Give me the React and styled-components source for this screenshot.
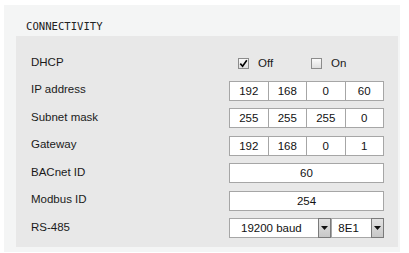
import React from "react";
import styled, { createGlobalStyle } from "styled-components";

const GlobalStyle = createGlobalStyle`
  html, body {
    margin: 0;
    padding: 0;
    background: #ffffff;
  }
  body {
    font-family: "Liberation Sans", Arial, sans-serif;
  }
`;

const App = () => {
  return (
    <>
      <GlobalStyle />
      <Panel>
        <Title>CONNECTIVITY</Title>
        <Box>
          <Row>
            <Label>DHCP</Label>
            <Choices>
              <Choice>
                <Check $checked>
                  <svg width="9" height="9" viewBox="0 0 9 9">
                    <path d="M1.3 4.6 L3.6 7.2 L7.8 1.2" fill="none" stroke="#000" strokeWidth="1.6" />
                  </svg>
                </Check>
                Off
              </Choice>
              <Choice>
                <Check />
                On
              </Choice>
            </Choices>
          </Row>

          <Row>
            <Label>IP address</Label>
            <Field>
              <Cell>192</Cell>
              <Cell>168</Cell>
              <Cell>0</Cell>
              <Cell>60</Cell>
            </Field>
          </Row>

          <Row>
            <Label>Subnet mask</Label>
            <Field>
              <Cell>255</Cell>
              <Cell>255</Cell>
              <Cell>255</Cell>
              <Cell>0</Cell>
            </Field>
          </Row>

          <Row>
            <Label>Gateway</Label>
            <Field>
              <Cell>192</Cell>
              <Cell>168</Cell>
              <Cell>0</Cell>
              <Cell>1</Cell>
            </Field>
          </Row>

          <Row>
            <Label>BACnet ID</Label>
            <Field>
              <Cell>60</Cell>
            </Field>
          </Row>

          <Row>
            <Label>Modbus ID</Label>
            <Field>
              <Cell>254</Cell>
            </Field>
          </Row>

          <Row>
            <Label>RS-485</Label>
            <Selects>
              <Select $width="103px">
                <SelectText $pad="11px">19200 baud</SelectText>
                <Arrow>
                  <svg width="7" height="4" viewBox="0 0 7 4">
                    <path d="M0 0 H7 L3.5 4 Z" fill="#111" />
                  </svg>
                </Arrow>
              </Select>
              <Select $width="53px">
                <SelectText $pad="6px">8E1</SelectText>
                <Arrow>
                  <svg width="7" height="4" viewBox="0 0 7 4">
                    <path d="M0 0 H7 L3.5 4 Z" fill="#111" />
                  </svg>
                </Arrow>
              </Select>
            </Selects>
          </Row>
        </Box>
      </Panel>
    </>
  );
};

export default App;

const Panel = styled.div`
  margin: 5px 9px 0 4px;
  width: 396px;
  height: 247px;
  box-sizing: border-box;
  background: #f4f5f5;
  padding: 0 0 0 12px;
`;

const Title = styled.div`
  height: 31px;
  box-sizing: border-box;
  padding: 15px 0 0 10px;
  font-family: "DejaVu Sans Mono", monospace;
  font-size: 10.6px;
  line-height: 12px;
  color: #222;
`;

const Box = styled.div`
  width: 382px;
  height: 211px;
  box-sizing: border-box;
  background: #e8e8e8;
  padding: 17px 14px 0 15px;
  display: flex;
  flex-direction: column;
  gap: 7.5px;
`;

const Row = styled.div`
  display: grid;
  grid-template-columns: 198px 155px;
  align-items: center;
  height: 20px;
`;

const Label = styled.div`
  font-size: 11.5px;
  line-height: 14px;
  color: #1a1a1a;
  margin-top: -3px;
`;

const Choices = styled.div`
  display: flex;
  align-items: center;
  padding-left: 9px;
`;

const Choice = styled.label`
  display: flex;
  align-items: center;
  gap: 9px;
  width: 80px;
  font-size: 11.5px;
  color: #1a1a1a;
`;

const Check = styled.span`
  width: 11px;
  height: 11px;
  box-sizing: border-box;
  border: 1px solid #8c8c8c;
  background: linear-gradient(#fafafa, #dedede);
  display: flex;
  align-items: center;
  justify-content: center;
`;

const Field = styled.div`
  display: flex;
  height: 20px;
  box-sizing: border-box;
  border: 1px solid #a6a6a6;
  background: #fff;
`;

const Cell = styled.div`
  flex: 1;
  text-align: center;
  font-size: 11.5px;
  line-height: 18px;
  color: #111;

  & + & {
    border-left: 1px solid #a6a6a6;
  }
`;

const Selects = styled.div`
  display: flex;
  height: 20px;
`;

const Select = styled.div`
  display: flex;
  width: ${(p) => p.$width};
  box-sizing: border-box;
  border: 1px solid #a6a6a6;
  background: #fff;
`;

const SelectText = styled.div`
  flex: 1;
  padding-left: ${(p) => p.$pad};
  font-size: 11.5px;
  line-height: 18px;
  color: #111;
`;

const Arrow = styled.div`
  width: 13px;
  box-sizing: border-box;
  border: 1px solid #7a7a7a;
  margin: -1px -1px -1px 0;
  height: 20px;
  background: linear-gradient(#e2e2e2, #c8c8c8);
  display: flex;
  align-items: center;
  justify-content: center;
`;
